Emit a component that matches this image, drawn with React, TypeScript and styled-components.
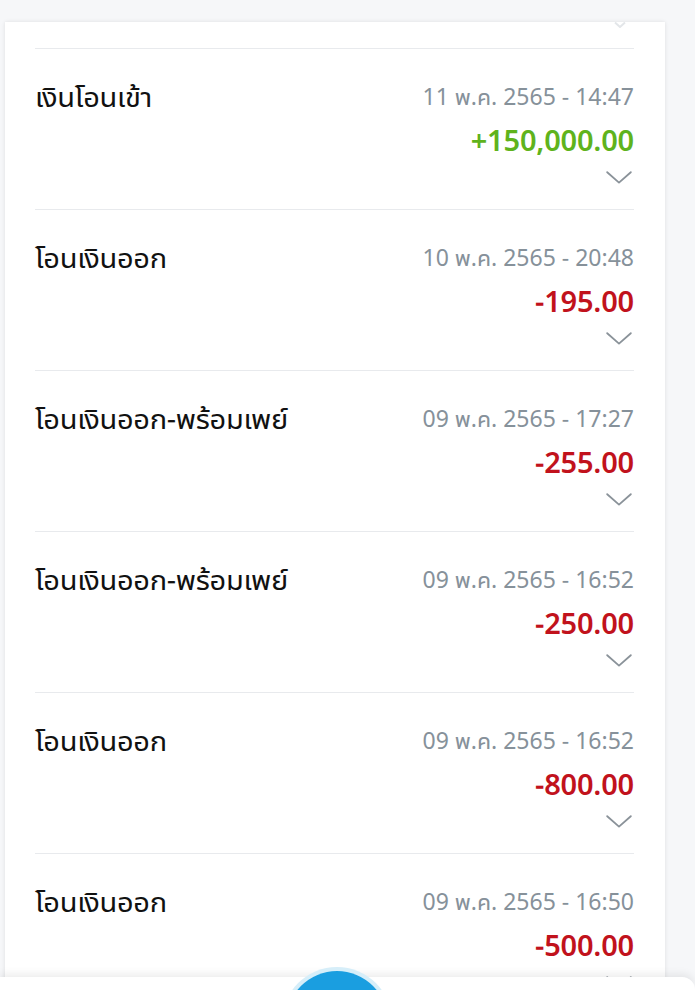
import React from "react";
import styled, { createGlobalStyle } from "styled-components";

const GlobalStyle = createGlobalStyle`
  html, body {
    margin: 0;
    padding: 0;
    background: #f6f7f9;
    font-family: "Noto Sans Thai UI", "Noto Sans Thai", "Noto Sans", "Liberation Sans", sans-serif;
    overflow: hidden;
  }
`;

const Page = styled.div`
  height: 990px;
  padding: 22px 0 0 5px;
  box-sizing: border-box;
  overflow: hidden;
`;

const Card = styled.div`
  width: 660px;
  background: #fff;
  box-shadow: 0 0 4px rgba(0, 0, 0, 0.1);
  padding: 0 31px 0 30px;
  box-sizing: border-box;
`;

const PrevTail = styled.div`
  height: 26px;
  display: flex;
  justify-content: flex-end;
  align-items: flex-start;
  padding-right: 8px;
`;

const Row = styled.div`
  border-top: 1px solid #e8eaed;
  height: 161px;
  display: flex;
  justify-content: space-between;
  padding-top: 32px;
  box-sizing: border-box;
`;

const Title = styled.div`
  font-size: 29px;
  color: #111;
  line-height: 34px;
  margin-top: -2px;
  letter-spacing: -0.3px;
`;

const Right = styled.div`
  display: flex;
  flex-direction: column;
  align-items: flex-end;
`;

const DateText = styled.div`
  font-size: 23px;
  color: #86919a;
  line-height: 30px;
  font-weight: 400;
`;

const Amount = styled.div<{ $positive: boolean }>`
  font-size: 29px;
  font-weight: 600;
  line-height: 38px;
  margin-top: 10px;
  letter-spacing: -0.2px;
  color: ${({ $positive }) => ($positive ? "#5fb31c" : "#c1121c")};
`;

const Chevron = styled.svg`
  margin-top: 12px;
  margin-right: 2px;
`;

const BottomBar = styled.div`
  position: fixed;
  left: 0;
  right: 0;
  bottom: 0;
  height: 13px;
  background: #fff;
  box-shadow: 0 -3px 8px rgba(0, 0, 0, 0.08);
  border-top-right-radius: 14px;
`;

const Fab = styled.div`
  position: absolute;
  left: 286px;
  top: -6px;
  width: 102px;
  height: 102px;
  border-radius: 50%;
  background: #1a9ee0;
  box-shadow: 0 0 0 4px #d6eef9;
`;

const rows = [
  { title: "เงินโอนเข้า", date: "11 พ.ค. 2565 - 14:47", amount: "+150,000.00", positive: true },
  { title: "โอนเงินออก", date: "10 พ.ค. 2565 - 20:48", amount: "-195.00", positive: false },
  { title: "โอนเงินออก-พร้อมเพย์", date: "09 พ.ค. 2565 - 17:27", amount: "-255.00", positive: false },
  { title: "โอนเงินออก-พร้อมเพย์", date: "09 พ.ค. 2565 - 16:52", amount: "-250.00", positive: false },
  { title: "โอนเงินออก", date: "09 พ.ค. 2565 - 16:52", amount: "-800.00", positive: false },
  { title: "โอนเงินออก", date: "09 พ.ค. 2565 - 16:50", amount: "-500.00", positive: false },
];

const ChevronIcon: React.FC = () => (
  <Chevron width={26} height={13} viewBox="0 0 26 13" fill="none">
    <path d="M1.2 1.2 L13 11.6 L24.8 1.2" stroke="#8a9299" strokeWidth="1.8" strokeLinecap="round" strokeLinejoin="round" />
  </Chevron>
);

const App: React.FC = () => {
  return (
    <Page>
      <GlobalStyle />
      <Card>
        <PrevTail>
          <svg width="12" height="6" viewBox="0 0 12 6" fill="none">
            <path d="M1 0.5 L6 5 L11 0.5" stroke="#e3e6e9" strokeWidth="2" />
          </svg>
        </PrevTail>
        {rows.map((r, i) => (
          <Row key={i}>
            <Title>{r.title}</Title>
            <Right>
              <DateText>{r.date}</DateText>
              <Amount $positive={r.positive}>{r.amount}</Amount>
              <ChevronIcon />
            </Right>
          </Row>
        ))}
      </Card>
      <BottomBar>
        <Fab />
      </BottomBar>
    </Page>
  );
};

export default App;
